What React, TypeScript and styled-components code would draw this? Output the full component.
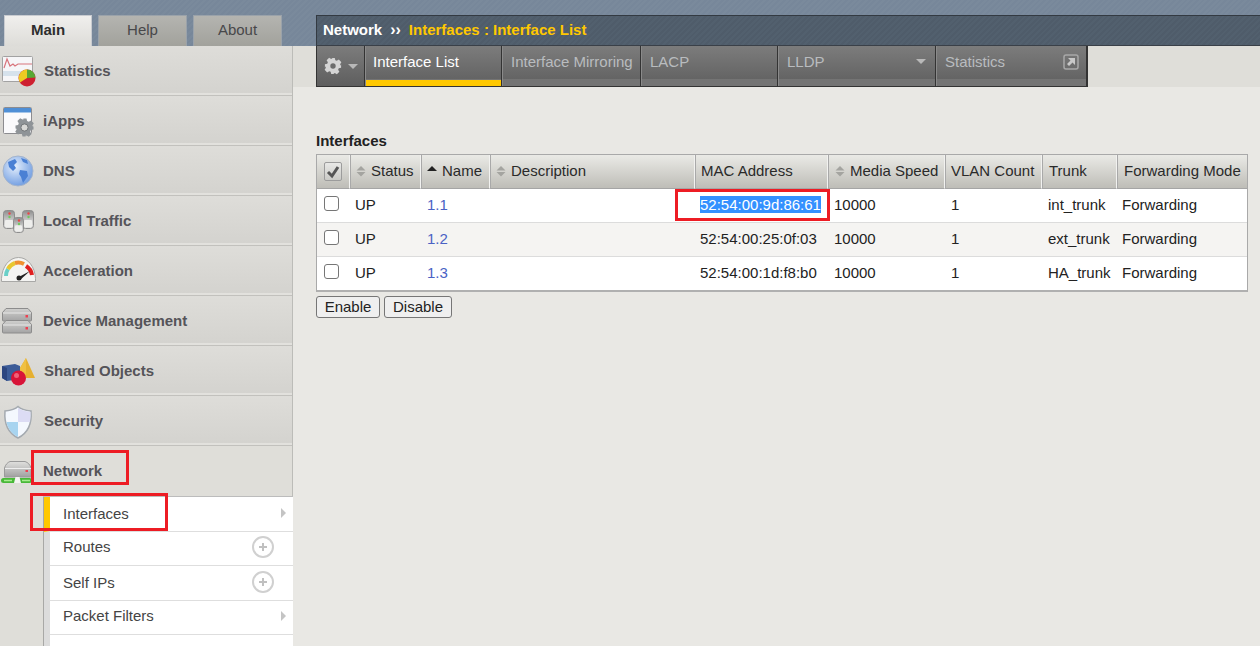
import React from "react";
import styled, { createGlobalStyle } from "styled-components";

const Global = createGlobalStyle`
  html, body { margin: 0; padding: 0; height: 100%; overflow: hidden; background: #e9e8e4; }
  * { box-sizing: border-box; }
  body { font-family: "Liberation Sans", Arial, sans-serif; }
`;

const Page = styled.div`
  position: relative;
  width: 1260px;
  height: 646px;
  overflow: hidden;
  background: #e9e8e4;
`;

const stripes = (a: string, b: string) =>
  `repeating-linear-gradient(135deg, ${a} 0 2px, ${b} 2px 4px)`;

const TopBar = styled.header`
  height: 46px;
  display: flex;
  background: ${stripes("#7a8a9c", "#77879a")};
`;

const TabStrip = styled.nav`
  width: 316px;
  padding: 15px 0 0 4px;
  display: flex;
  gap: 6px;
`;

const TopTab = styled.div<{ $active?: boolean; $w: number }>`
  width: ${(p) => p.$w}px;
  height: 31px;
  padding-bottom: 4px;
  display: flex;
  align-items: center;
  justify-content: center;
  font-size: 15px;
  font-weight: ${(p) => (p.$active ? 700 : 400)};
  color: ${(p) => (p.$active ? "#2e2e2e" : "#48484a")};
  background: ${(p) =>
    p.$active
      ? "linear-gradient(#f0efed, #dddcd8)"
      : "linear-gradient(#b4b4b0, #a2a29c)"};
  border: 1px solid ${(p) => (p.$active ? "#c8cbd0" : "#9aa2aa")};
  border-bottom: 0;
`;

const Crumb = styled.div`
  flex: 1;
  margin-top: 15px;
  height: 31px;
  padding: 0 0 2px 6px;
  display: flex;
  align-items: center;
  gap: 8px;
  font-size: 15px;
  font-weight: 700;
  color: #fff;
  background: ${stripes("#52606e", "#4f5c6a")};
  border-top: 1px solid #333a42;
  border-left: 1px solid #333a42;
  border-bottom: 1px solid #3a4048;
`;

const CrumbSep = styled.span`
  font-size: 16px;
`;

const CrumbPath = styled.span`
  color: #ffc800;
`;

const Body = styled.div`
  display: flex;
  height: 600px;
`;

const Sidebar = styled.aside`
  width: 293px;
  flex: none;
  background: #dfded9;
  border-right: 1px solid #bcbcb8;
`;

const NavRow = styled.div<{ $open?: boolean }>`
  height: 50px;
  display: flex;
  align-items: center;
  background: ${(p) =>
    p.$open
      ? "#dfded9"
      : "linear-gradient(#dedDd9 0, #d4d3cf 47px, #e2e1dd 47px, #e2e1dd 49px, #c2c1bd 49px, #c2c1bd 50px)"};
`;

const NavIcon = styled.svg`
  width: 40px;
  height: 40px;
  flex: none;
`;

const NavLabel = styled.span<{ $shift?: number }>`
  margin-left: ${(p) => 3 + (p.$shift ?? 0)}px;
  margin-top: -2px;
  font-size: 15px;
  font-weight: 700;
  color: #555459;
`;

const SubTopLine = styled.div`
  height: 1px;
  margin: 0 -1px 0 43px;
  background: #bcbcbc;
`;

const SubList = styled.ul`
  list-style: none;
  margin: 0 -1px 0 43px;
  padding: 0;
  border-left: 1px solid #a8a8a6;
  background: #dcdcdc;
`;

const SubRow = styled.li<{ $active?: boolean; $h: number }>`
  height: ${(p) => p.$h}px;
  display: flex;
  align-items: center;
  justify-content: space-between;
  padding: 0 18px ${(p) => (p.$h === 34 ? 4 : 2)}px 13px;
  border-left: 6px solid ${(p) => (p.$active ? "#ffc800" : "#dcdcdc")};
  border-bottom: 1px solid #dedede;
  background: #fff;
  font-size: 15px;
  color: #444;
`;

const Arrow = styled.i`
  width: 0;
  height: 0;
  margin-right: -11px;
  border-left: 5px solid #c4c4c4;
  border-top: 5px solid transparent;
  border-bottom: 5px solid transparent;
`;

const PlusBtn = styled.svg`
  width: 24px;
  height: 24px;
`;

const Content = styled.main`
  flex: 1;
  min-width: 0;
  display: flex;
  flex-direction: column;
`;

const TabBand = styled.div`
  height: 41px;
  padding-left: 23px;
  background: #dfded9;
  display: flex;
`;

const Tabs = styled.div`
  display: flex;
  height: 41px;
  border: 1px solid #333;
  border-top: 0;
`;

const Tab = styled.div<{ $w: number; $active?: boolean }>`
  position: relative;
  width: ${(p) => p.$w}px;
  height: 40px;
  padding: 0 9px 9px ${(p) => (p.$active ? 8 : 9)}px;
  display: flex;
  align-items: center;
  justify-content: space-between;
  white-space: nowrap;
  font-size: 15px;
  color: ${(p) => (p.$active ? "#fff" : "#b9bcbf")};
  background: linear-gradient(#7c7c7c, #646464 33px, #747474 33px, #747474);
  border-right: 1px solid #333;
  box-shadow: inset 1px 0 0 #8a8a8a;
`;

const ActiveBar = styled.span`
  position: absolute;
  left: 1px;
  right: 0;
  bottom: 0;
  height: 6px;
  background: #ffc800;
`;

const GearTab = styled.div`
  width: 48px;
  height: 40px;
  display: flex;
  align-items: center;
  justify-content: center;
  gap: 6px;
  background: linear-gradient(#7c7c7c, #5e5e5e);
  border-right: 1px solid #333;
`;

const Caret = styled.i`
  width: 0;
  height: 0;
  border-left: 5px solid transparent;
  border-right: 5px solid transparent;
  border-top: 5px solid #b8b8b8;
`;

const ExtIcon = styled.svg`
  width: 16px;
  height: 16px;
  margin-right: -2px;
`;

const TableArea = styled.section`
  padding: 46px 12px 0 23px;
`;

const Title = styled.h2`
  margin: 0 0 5px;
  height: 16px;
  line-height: 16px;
  font-size: 15px;
  font-weight: 700;
  color: #222;
`;

const Table = styled.table`
  width: 932px;
  table-layout: fixed;
  border-collapse: separate;
  border-spacing: 0;
  border: 1px solid #a9a9a9;
  border-bottom: 2px solid #b0b0b0;
  font-size: 15px;
  color: #222;
  background: #fff;
`;

const Th = styled.th<{ $sort?: boolean }>`
  height: 34px;
  padding: 0 0 ${(p) => (p.$sort ? 0 : 2)}px 5px;
  font-weight: 400;
  text-align: left;
  white-space: nowrap;
  color: #2a2a2a;
  background: linear-gradient(#eaeae6, #bebdb7);
  border-right: 1px solid #f2f2f0;
  border-left: 1px solid #a9a9a9;
  border-bottom: 1px solid #a5a5a5;
  &:first-child { border-left: 0; padding-bottom: 0; }
  &:last-child { border-right: 0; }
  &:nth-child(6), &:nth-child(8), &:nth-child(9) { padding-left: 6px; }
`;

const Td = styled.td`
  height: 34px;
  padding: 0 0 3px 5px;
  white-space: nowrap;
  border-bottom: 1px solid #dcdcdc;
  tr:last-child & { border-bottom: 0; height: 33px; }
  &:nth-child(n + 6):nth-child(-n + 8) { padding-left: 6px; }
`;

const Row = styled.tr<{ $alt?: boolean }>`
  background: ${(p) => (p.$alt ? "#f5f4f2" : "#fff")};
`;

const NameLink = styled.a`
  color: #4a62c4;
  margin-left: 1px;
`;

const Selected = styled.span`
  background: #3390ff;
  color: #fff;
`;

const CheckBox = styled.span`
  display: block;
  width: 15px;
  height: 15px;
  margin: -1px 0 0 2px;
  background: #fff;
  border: 1px solid #767676;
  border-radius: 3px;
`;

const HeadCheck = styled.span`
  display: flex;
  align-items: center;
  justify-content: center;
  width: 18px;
  height: 19px;
  margin-left: 2px;
  background: linear-gradient(#e8e8e6, #cacac6);
  border: 1px solid #9c9c9c;
  border-radius: 2px;
`;

const SortWrap = styled.span`
  display: inline-flex;
  align-items: center;
  gap: 5px;
`;

const SortIcon = styled.svg`
  width: 10px;
  height: 14px;
  flex: none;
`;

const Buttons = styled.div`
  display: flex;
  gap: 4px;
  margin-top: 4px;
`;

const Button = styled.button<{ $w: number }>`
  width: ${(p) => p.$w}px;
  height: 22px;
  padding: 0 0 2px;
  font: 15px "Liberation Sans", Arial, sans-serif;
  color: #222;
  background: #efefef;
  border: 1px solid #767676;
  border-radius: 3px;
`;

const Callout = styled.div<{ $x: number; $y: number; $w: number; $h: number }>`
  position: absolute;
  left: ${(p) => p.$x}px;
  top: ${(p) => p.$y}px;
  width: ${(p) => p.$w}px;
  height: ${(p) => p.$h}px;
  border: 3px solid #ed1c24;
  pointer-events: none;
`;

const GearPath =
  "M-2-9h4l.6 2.6 1.6.7 2.3-1.4 2.8 2.8-1.4 2.3.7 1.6L9-2v4l-2.6.6-.7 1.6 1.4 2.3-2.8 2.8-2.3-1.4-1.6.7L2 9h-4l-.6-2.6-1.6-.7-2.3 1.4-2.8-2.8 1.4-2.3-.7-1.6L-9 2v-4l2.6-.6.7-1.6-1.4-2.3 2.8-2.8 2.3 1.4 1.6-.7z";

const Can = ({ x, y, w, h }: { x: number; y: number; w: number; h: number }) => (
  <>
    <rect x={x + 0.5} y={y + 0.5} width={w} height={h} rx="3" fill="url(#can)" stroke="#8e8e8e" />
    <rect x={x + 2} y={y + h * 0.55} width={w - 3} height={h * 0.4} rx="1" fill="#eeeeec" />
    <circle cx={x + w / 2 + 1} cy={y + 3.5} r="1.2" fill="#e84848" />
    <circle cx={x + w / 2 + 1} cy={y + 7} r="1.2" fill="#70c860" />
  </>
);

const Disk = ({ y }: { y: number }) => (
  <>
    <path d={`M6 ${y + 0.5}h22l3.500 4v7.500a1 1 0 0 1-1 1h-27a1 1 0 0 1-1-1V${y + 4.5}z`} fill="url(#disk)" stroke="#8c8c8c" />
    <path d={`M3 ${y + 5}h28`} stroke="#e8e8e8" />
    <rect x="25.500" y={y + 7} width="2.500" height="2.500" fill="#ee4050" />
  </>
);

const Icons = {
  stats: (
    <>
      <rect x="2.500" y="5.500" width="30" height="25" rx="1" fill="#f6f6f8" stroke="#a2a2a2" />
      <rect x="3" y="20" width="29" height="5" fill="#d6e2ec" />
      <path d="M4 17l3-9 3 7 3-2 2 2 3-2h14" fill="none" stroke="#d8747c" strokeWidth="1.200" />
      <circle cx="27" cy="27" r="8.500" fill="#ce2030" />
      <path d="M27 27V18.500a8.500 8.500 0 0 1 8.500 8z" fill="#58a834" />
      <path d="M27 27V18.500a8.500 8.500 0 0 0-7 13z" fill="#eccb22" />
    </>
  ),
  apps: (
    <>
      <rect x="3.500" y="6.500" width="28" height="26" rx="1" fill="#fafafc" stroke="#8c8c90" />
      <rect x="4" y="7" width="27" height="4.500" fill="#4f8fd6" />
      <g transform="translate(24.500 26.500)">
        <path d={GearPath} fill="#8f9498" />
        <circle r="3.600" fill="#d8d8d6" stroke="#73777a" />
      </g>
    </>
  ),
  dns: (
    <>
      <defs>
        <radialGradient id="glb" cx="40%" cy="35%" r="70%">
          <stop offset="0" stopColor="#e4eefc" />
          <stop offset="1" stopColor="#6c9ae0" />
        </radialGradient>
      </defs>
      <circle cx="18" cy="20" r="15" fill="url(#glb)" stroke="#a4b4cc" />
      <path d="M8 11l7-3 2 3-3 3 2 3-3 3-4-4zM20 19l7 1 1 5-5 7-2-6-2-3zM21 7l6 2 1 4-5-2z" fill="#4a80d4" />
    </>
  ),
  traffic: (
    <>
      <defs>
        <linearGradient id="can" x1="0" y1="0" x2="0" y2="1">
          <stop offset="0" stopColor="#8e8e8e" />
          <stop offset=".5" stopColor="#c4c4c4" />
          <stop offset="1" stopColor="#e4e4e2" />
        </linearGradient>
      </defs>
      <Can x={3} y={9} w={11} h={18} />
      <Can x={22} y={9} w={11} h={18} />
      <Can x={13} y={16} w={10} h={15} />
    </>
  ),
  accel: (
    <>
      <path d="M1.500 30.500v-3C2 16 9 6.500 18.500 6.500S35 16 35.500 27.500v3z" fill="#f4f4f2" stroke="#a8a8a6" />
      <path d="M6 25a12.500 12.500 0 0 1 2-7" fill="none" stroke="#6ad0c8" strokeWidth="4" />
      <path d="M8 18a13 13 0 0 1 7-6" fill="none" stroke="#e8c830" strokeWidth="4" />
      <path d="M15 12a13 13 0 0 1 9 1" fill="none" stroke="#f09030" strokeWidth="4" />
      <path d="M26 15a13 13 0 0 1 6 9" fill="none" stroke="#e02020" strokeWidth="4" />
      <path d="M17 27l13-7-10 9z" fill="#222" />
      <circle cx="19" cy="27" r="2.500" fill="#222" />
    </>
  ),
  device: (
    <>
      <defs>
        <linearGradient id="disk" x1="0" y1="0" x2="0" y2="1">
          <stop offset="0" stopColor="#d0d0ce" />
          <stop offset="1" stopColor="#a4a4a4" />
        </linearGradient>
      </defs>
      <Disk y={7} />
      <Disk y={19} />
    </>
  ),
  shared: (
    <>
      <path d="M26 7l9 20H14z" fill="#e6b030" />
      <path d="M26 7v20H14z" fill="#f0c040" />
      <path d="M2 15l13-2 5 2v13l-13 2-5-3z" fill="#3c5c98" />
      <path d="M2 15l5 2v13l-5-3z" fill="#2c4680" />
      <circle cx="18.500" cy="27" r="7.500" fill="#d81438" />
      <circle cx="16.500" cy="24.500" r="2.500" fill="#f06078" />
    </>
  ),
  security: (
    <>
      <path d="M18 5.500c3 3 8 4 13 4.500 1 12-3 22-13 27C8 32 4 22 5 10c5-.500 10-1.500 13-4.500z" fill="#f4f8fe" stroke="#a4aab0" strokeWidth="1.500" />
      <path d="M18 7v14h12c.500-3 .500-6 .500-10-4-.500-9-1.500-12.500-4z" fill="#dcdcf4" />
      <path d="M18 21H6.500c1 6 5 12 11.500 15z" fill="#a8d4f0" />
    </>
  ),
  network: (
    <>
      <defs>
        <linearGradient id="net" x1="0" y1="0" x2="0" y2="1">
          <stop offset="0" stopColor="#e0e0de" />
          <stop offset="1" stopColor="#a0a0a0" />
        </linearGradient>
      </defs>
      <path d="M10 10.500h15c3 1 5 3 6 6.500v9H4.500V17c1-3.500 3-5.500 5.500-6.500z" fill="url(#net)" stroke="#9a9a9a" />
      <path d="M5 17.500h26" stroke="#eee" />
      <rect x="25.500" y="19" width="2.500" height="2" fill="#ee4050" />
      <rect x="1" y="27" width="31" height="5" rx="2.500" fill="#48b838" />
      <path d="M4 29.500h8M22 29.500h8" stroke="#a8ec90" strokeWidth="1.500" />
      <path d="M14 32l1.500-6h4l1.500 6z" fill="#f4f4f2" />
    </>
  ),
};

const navItems: { label: string; icon: keyof typeof Icons; shift?: number }[] = [
  { label: "Statistics", icon: "stats", shift: 1 },
  { label: "iApps", icon: "apps" },
  { label: "DNS", icon: "dns" },
  { label: "Local Traffic", icon: "traffic" },
  { label: "Acceleration", icon: "accel" },
  { label: "Device Management", icon: "device" },
  { label: "Shared Objects", icon: "shared", shift: 1 },
  { label: "Security", icon: "security", shift: 1 },
];

const Plus = () => (
  <PlusBtn viewBox="0 0 24 24">
    <circle cx="12" cy="12" r="10" fill="#fff" stroke="#d0d0d0" strokeWidth="2" />
    <path d="M8 12h8M12 8v8" stroke="#c0c0c0" strokeWidth="2" />
  </PlusBtn>
);

const Sort = ({ up }: { up?: boolean }) => (
  <SortIcon viewBox="0 0 10 14">
    {up ? (
      <path d="M0 7l5-5 5 5z" fill="#222" />
    ) : (
      <>
        <path d="M.5 6.500L5 2l4.500 4.500z" fill="#a4a4a0" />
        <path d="M.5 8L5 12.500 9.500 8z" fill="#a4a4a0" />
      </>
    )}
  </SortIcon>
);

const rows = [
  { n: "1.1", mac: "52:54:00:9d:86:61", trunk: "int_trunk", sel: true },
  { n: "1.2", mac: "52:54:00:25:0f:03", trunk: "ext_trunk", alt: true },
  { n: "1.3", mac: "52:54:00:1d:f8:b0", trunk: "HA_trunk" },
];

export default function App() {
  return (
    <Page>
      <Global />
      <TopBar>
        <TabStrip>
          <TopTab $active $w={88}>Main</TopTab>
          <TopTab $w={89}>Help</TopTab>
          <TopTab $w={89}>About</TopTab>
        </TabStrip>
        <Crumb>
          Network <CrumbSep>››</CrumbSep> <CrumbPath>Interfaces : Interface List</CrumbPath>
        </Crumb>
      </TopBar>
      <Body>
        <Sidebar>
          {navItems.map((n) => (
            <NavRow key={n.label}>
              <NavIcon viewBox="0 0 40 40">{Icons[n.icon]}</NavIcon>
              <NavLabel $shift={n.shift}>{n.label}</NavLabel>
            </NavRow>
          ))}
          <NavRow $open>
            <NavIcon viewBox="0 0 40 40">{Icons.network}</NavIcon>
            <NavLabel>Network</NavLabel>
          </NavRow>
          <SubTopLine />
          <SubList>
            <SubRow $active $h={35}>Interfaces<Arrow /></SubRow>
            <SubRow $h={34}>Routes<Plus /></SubRow>
            <SubRow $h={35}>Self IPs<Plus /></SubRow>
            <SubRow $h={34}>Packet Filters<Arrow /></SubRow>
            <SubRow $h={34} />
          </SubList>
        </Sidebar>
        <Content>
          <TabBand>
            <Tabs>
              <GearTab>
                <svg width="18" height="18" viewBox="-10 -10 20 20">
                  <path d={GearPath} fill="#d4d4d4" />
                  <circle r="3" fill="#6c6c6c" />
                </svg>
                <Caret />
              </GearTab>
              <Tab $w={137} $active>Interface List<ActiveBar /></Tab>
              <Tab $w={139}>Interface Mirroring</Tab>
              <Tab $w={137}>LACP</Tab>
              <Tab $w={158}>
                LLDP
                <Caret />
              </Tab>
              <Tab $w={151}>
                Statistics
                <ExtIcon viewBox="0 0 16 16">
                  <rect x="1" y="1" width="14" height="14" rx="2" fill="none" stroke="#a8a8a8" strokeWidth="1.500" />
                  <path d="M5 4h7v7l-2.500-2.500L6 12 4 10l3.500-3.500z" fill="#c8c8c8" />
                </ExtIcon>
              </Tab>
            </Tabs>
          </TabBand>
          <TableArea>
            <Title>Interfaces</Title>
            <Table>
              <colgroup>
                <col width={33} /><col width={71} /><col width={69} /><col width={205} />
                <col width={133} /><col width={117} /><col width={97} /><col width={75} /><col width={130} />
              </colgroup>
              <thead>
                <tr>
                  <Th>
                    <HeadCheck>
                      <svg width="14" height="14" viewBox="0 0 14 14">
                        <path d="M2 7l4 4 6-9" fill="none" stroke="#555" strokeWidth="3" />
                      </svg>
                    </HeadCheck>
                  </Th>
                  <Th $sort><SortWrap><Sort />Status</SortWrap></Th>
                  <Th $sort><SortWrap><Sort up />Name</SortWrap></Th>
                  <Th $sort><SortWrap><Sort />Description</SortWrap></Th>
                  <Th>MAC Address</Th>
                  <Th $sort><SortWrap><Sort />Media Speed</SortWrap></Th>
                  <Th>VLAN Count</Th>
                  <Th>Trunk</Th>
                  <Th>Forwarding Mode</Th>
                </tr>
              </thead>
              <tbody>
                {rows.map((r) => (
                  <Row key={r.n} $alt={r.alt}>
                    <Td><CheckBox /></Td>
                    <Td>UP</Td>
                    <Td><NameLink>{r.n}</NameLink></Td>
                    <Td />
                    <Td>{r.sel ? <Selected>{r.mac}</Selected> : r.mac}</Td>
                    <Td>10000</Td>
                    <Td>1</Td>
                    <Td>{r.trunk}</Td>
                    <Td>Forwarding</Td>
                  </Row>
                ))}
              </tbody>
            </Table>
            <Buttons>
              <Button $w={64}>Enable</Button>
              <Button $w={68}>Disable</Button>
            </Buttons>
          </TableArea>
        </Content>
      </Body>
      <Callout $x={31} $y={450} $w={98} $h={35} />
      <Callout $x={30} $y={493} $w={138} $h={38} />
      <Callout $x={675} $y={189} $w={155} $h={32} />
    </Page>
  );
}
